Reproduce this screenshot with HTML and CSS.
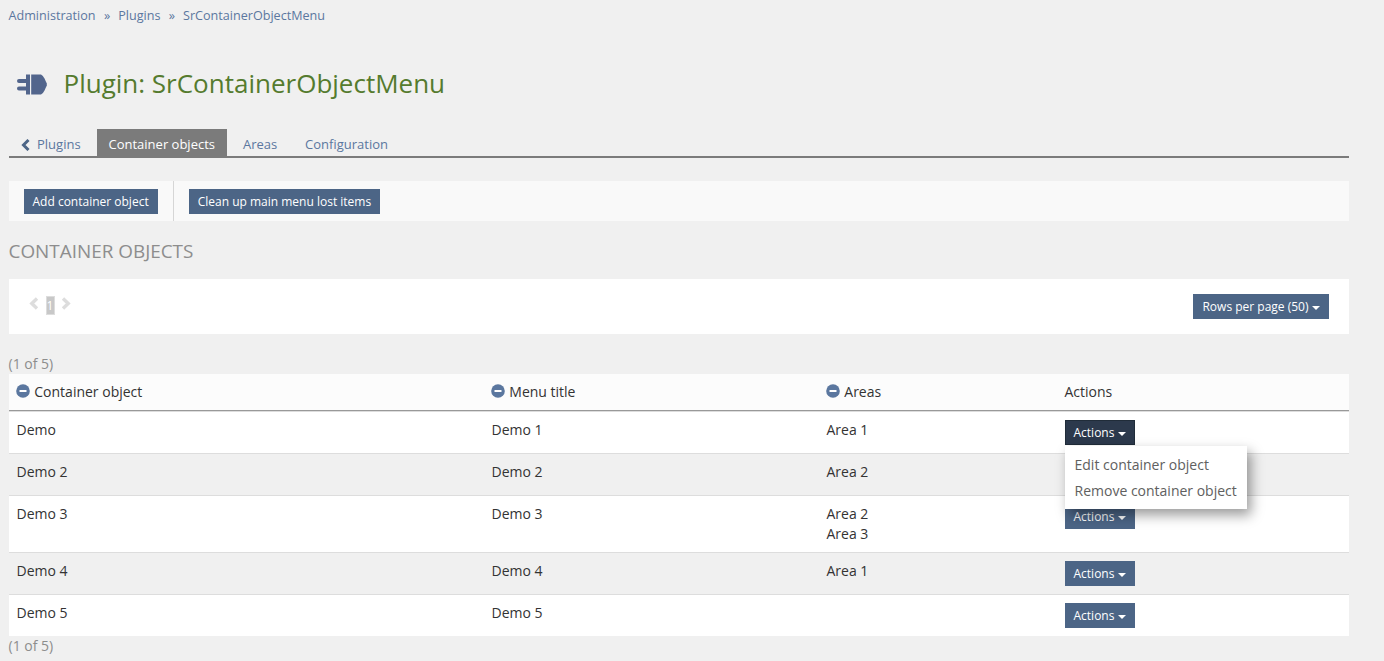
FILE: index.html
```
<!DOCTYPE html>
<html lang="en">
<head>
<meta charset="utf-8">
<title>Plugin: SrContainerObjectMenu</title>
<link rel="stylesheet" href="styles.css">
</head>
<body>
<nav class="breadcrumb"><a>Administration</a><span>»</span><a>Plugins</a><span>»</span><a>SrContainerObjectMenu</a></nav>
<header class="title">
  <svg class="plug" width="30" height="21" viewBox="0 0 30 21"><path d="M9 .5h4v20H9v-4H2q-2 0-2-2t2-2h7v-3.500H2Q0 9 0 7t2-2h7z"/><path d="M14.200.5H24q2 .8 3.500 4l2.300 5v2l-2.300 5q-1.500 3.200-3.500 4h-9.800z"/></svg>
  <h1>Plugin: SrContainerObjectMenu</h1>
</header>
<nav class="tabs">
  <a class="tab back"><svg width="9" height="12" viewBox="0 0 9 12"><path d="M7.500 1 2.500 6l5 5"/></svg>Plugins</a>
  <a class="tab active">Container objects</a>
  <a class="tab areas">Areas</a>
  <a class="tab">Configuration</a>
</nav>
<div class="toolbar">
  <div class="tool"><button class="btn">Add container object</button></div>
  <div class="tool"><button class="btn">Clean up main menu lost items</button></div>
</div>
<h2>Container objects</h2>
<div class="controls">
  <div class="pager">
    <svg width="10" height="13" viewBox="0 0 10 13"><path d="M8 1.500 2.800 6.500l5.200 5"/></svg>
    <span class="page">1</span>
    <svg width="10" height="13" viewBox="0 0 10 13"><path d="m2 1.500 5.200 5-5.200 5"/></svg>
  </div>
  <button class="btn">Rows per page (50)<i class="caret"></i></button>
</div>
<div class="count">(1 of 5)</div>
<div class="table">
  <div class="row head">
    <div><svg class="minus" width="14" height="14" viewBox="0 0 14 14"><circle cx="7" cy="7" r="6.800"/><path d="M3.500 6h7v2h-7z"/></svg>Container object</div>
    <div><svg class="minus" width="14" height="14" viewBox="0 0 14 14"><circle cx="7" cy="7" r="6.800"/><path d="M3.500 6h7v2h-7z"/></svg>Menu title</div>
    <div><svg class="minus" width="14" height="14" viewBox="0 0 14 14"><circle cx="7" cy="7" r="6.800"/><path d="M3.500 6h7v2h-7z"/></svg>Areas</div>
    <div>Actions</div>
  </div>
  <div class="row"><div>Demo</div><div>Demo 1</div><div>Area 1</div>
    <div class="dropdown"><button class="btn open">Actions<i class="caret"></i></button>
      <div class="menu"><a>Edit container object</a><a>Remove container object</a></div>
    </div>
  </div>
  <div class="row alt"><div>Demo 2</div><div>Demo 2</div><div>Area 2</div><div><button class="btn">Actions<i class="caret"></i></button></div></div>
  <div class="row"><div>Demo 3</div><div>Demo 3</div><div>Area 2<br>Area 3</div><div><button class="btn">Actions<i class="caret"></i></button></div></div>
  <div class="row alt"><div>Demo 4</div><div>Demo 4</div><div>Area 1</div><div><button class="btn">Actions<i class="caret"></i></button></div></div>
  <div class="row"><div>Demo 5</div><div>Demo 5</div><div></div><div><button class="btn">Actions<i class="caret"></i></button></div></div>
</div>
<div class="count">(1 of 5)</div>
</body>
</html>
```
FILE: styles.css
```
* { box-sizing: border-box; }
body {
  margin: 0;
  padding: 6px 35px 0 8.5px;
  background: #f0f0f0;
  color: #333;
  font: 14px/20px "Open Sans", sans-serif;
  overflow: hidden;
}
.breadcrumb { display: flex; height: 19px; font-size: 12.6px; line-height: 19px; color: #5b779f; }
.breadcrumb span { margin: 0 8px 0 8.4px; }
.title { display: flex; align-items: center; height: 40px; margin-top: 39px; padding-left: 8.5px; gap: 16.5px; }
.plug { fill: #52658c; }
h1 { margin: -2px 0 0; font-size: 26px; font-weight: 400; line-height: 36px; color: #557b2e; }
.tabs { display: flex; height: 29px; margin-top: 25px; border-bottom: 2px solid #7b7b7b; font-size: 13px; line-height: 31px; color: #5b779f; white-space: nowrap; }
.tab { padding: 0 12px; }
.back { display: flex; width: 88px; height: 31px; padding-left: 12.5px; align-items: center; gap: 6px; }
.back svg { margin-right: 1px; }
.back svg path { fill: none; stroke: #4c6586; stroke-width: 3; }
.active { width: 130px; background: #7b7b7b; color: #fff; }
.areas { padding-left: 16.5px; padding-right: 15.8px; }
.toolbar { display: flex; height: 40px; margin-top: 23px; background: #f9f9f9; }
.tool { padding: 8px 15px; }
.tool + .tool { border-left: 1px solid #d6d6d6; }
.btn {
  display: flex;
  align-items: center;
  height: 25px;
  padding: 0 8px;
  border: 1px solid #4c6586;
  background: #4c6586;
  color: #fff;
  font: 12px/23px "Open Sans", sans-serif;
  white-space: nowrap;
}
.open { border-color: #202c39; background: #2c394c; }
.caret { margin: 2px 0 0 3.500px; border: 4px solid transparent; border-top-color: currentColor; border-bottom: 0; }
h2 { margin: 17px 0 0; font-size: 18.9px; font-weight: 400; line-height: 26px; text-transform: uppercase; color: #8d8d8d; }
.controls { display: flex; justify-content: space-between; height: 55px; margin-top: 15px; padding: 15px 20px; background: #fff; }
.pager { display: flex; padding: 2px 0 0 0.5px; }
.pager svg { margin-top: 1px; }
.pager path { fill: none; stroke: #ddd; stroke-width: 3.4; }
.page { width: 9px; height: 19px; margin: 0 6.5px; border: 1px solid #ddd; background: #c8c8c8; color: #fff; font-size: 12px; line-height: 18px; text-align: center; }
.count { height: 20px; color: #8d8d8d; }
.controls + .count { margin-top: 20px; }
.row { display: grid; grid-template-columns: 475px 335px 238px 1fr; border-top: 1px solid #ddd; background: #fff; }
.row > div { padding: 8px; }
.alt { background: #f0f0f0; }
.head { height: 37px; border-top: 0; border-bottom: 1px solid #999; background: #fcfcfc; }
.minus { margin: 0 4.300px 0 -0.500px; vertical-align: -1px; fill: #5b779f; }
.minus path { fill: #fff; }
.dropdown { position: relative; }
.menu { position: absolute; z-index: 2; top: 34px; left: 8px; width: 182px; height: 63px; padding: 6px 0 5px; background: #fff; box-shadow: 4px 6px 12px rgba(0, 0, 0, .4); color: #606060; }
.menu a { display: block; padding: 3px 10px; white-space: nowrap; }
```
